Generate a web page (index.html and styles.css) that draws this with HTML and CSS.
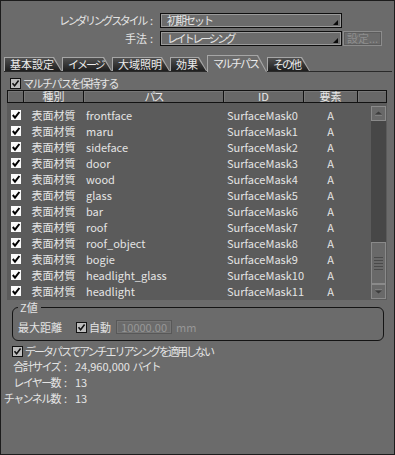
FILE: index.html
```html
<!DOCTYPE html>
<html lang="ja">
<head>
<meta charset="utf-8">
<link rel="stylesheet" href="styles.css">
</head>
<body>
<div class="win">
  <div class="top">
    <div class="frow">
      <span class="flabel"><span class="kana-l">レンダリングスタイル</span><span class="colon">:</span></span>
      <div class="select"><span class="sel-text kana">初期セット</span><i class="arrow"></i></div>
    </div>
    <div class="frow">
      <span class="flabel">手法<span class="colon c2">:</span></span>
      <div class="select"><span class="sel-text kana2">レイトレーシング</span><i class="arrow"></i></div>
      <div class="btn">設定...</div>
    </div>
  </div>

  <div class="tabs">
    <div class="tab w1"><div class="tab-in">基本設定</div></div>
    <div class="tab w2"><div class="tab-in kana">イメージ</div></div>
    <div class="tab w3"><div class="tab-in">大域照明</div></div>
    <div class="tab w4"><div class="tab-in">効果</div></div>
    <div class="tab w5 active"><div class="tab-in kana">マルチパス</div></div>
    <div class="tab w6"><div class="tab-in kana">その他</div></div>
  </div>

  <div class="chk-row keep">
    <span class="cb"><svg viewBox="0 0 9 9"><path d="M1.5 4.3 L3.6 6.8 L7.6 1.6"/></svg></span>
    <span class="chk-label kana1">マルチパスを保持する</span>
  </div>

  <div class="table">
    <div class="thead">
      <div class="th"></div>
      <div class="th">種別</div>
      <div class="th kana">パス</div>
      <div class="th">ID</div>
      <div class="th">要素</div>
      <div class="th"></div>
    </div>
    <div class="tbody">
      <div class="rows">
        <div class="tr"><span class="c-chk"><i class="wcb"><svg viewBox="0 0 10 10"><path d="M1.8 5 L4 7.6 L8.4 2"/></svg></i></span><span class="c-type">表面材質</span><span class="c-path">frontface</span><span class="c-id">SurfaceMask0</span><span class="c-el">A</span></div>
        <div class="tr"><span class="c-chk"><i class="wcb"><svg viewBox="0 0 10 10"><path d="M1.8 5 L4 7.6 L8.4 2"/></svg></i></span><span class="c-type">表面材質</span><span class="c-path">maru</span><span class="c-id">SurfaceMask1</span><span class="c-el">A</span></div>
        <div class="tr"><span class="c-chk"><i class="wcb"><svg viewBox="0 0 10 10"><path d="M1.8 5 L4 7.6 L8.4 2"/></svg></i></span><span class="c-type">表面材質</span><span class="c-path">sideface</span><span class="c-id">SurfaceMask2</span><span class="c-el">A</span></div>
        <div class="tr"><span class="c-chk"><i class="wcb"><svg viewBox="0 0 10 10"><path d="M1.8 5 L4 7.6 L8.4 2"/></svg></i></span><span class="c-type">表面材質</span><span class="c-path">door</span><span class="c-id">SurfaceMask3</span><span class="c-el">A</span></div>
        <div class="tr"><span class="c-chk"><i class="wcb"><svg viewBox="0 0 10 10"><path d="M1.8 5 L4 7.6 L8.4 2"/></svg></i></span><span class="c-type">表面材質</span><span class="c-path">wood</span><span class="c-id">SurfaceMask4</span><span class="c-el">A</span></div>
        <div class="tr"><span class="c-chk"><i class="wcb"><svg viewBox="0 0 10 10"><path d="M1.8 5 L4 7.6 L8.4 2"/></svg></i></span><span class="c-type">表面材質</span><span class="c-path">glass</span><span class="c-id">SurfaceMask5</span><span class="c-el">A</span></div>
        <div class="tr"><span class="c-chk"><i class="wcb"><svg viewBox="0 0 10 10"><path d="M1.8 5 L4 7.6 L8.4 2"/></svg></i></span><span class="c-type">表面材質</span><span class="c-path">bar</span><span class="c-id">SurfaceMask6</span><span class="c-el">A</span></div>
        <div class="tr"><span class="c-chk"><i class="wcb"><svg viewBox="0 0 10 10"><path d="M1.8 5 L4 7.6 L8.4 2"/></svg></i></span><span class="c-type">表面材質</span><span class="c-path">roof</span><span class="c-id">SurfaceMask7</span><span class="c-el">A</span></div>
        <div class="tr"><span class="c-chk"><i class="wcb"><svg viewBox="0 0 10 10"><path d="M1.8 5 L4 7.6 L8.4 2"/></svg></i></span><span class="c-type">表面材質</span><span class="c-path">roof_object</span><span class="c-id">SurfaceMask8</span><span class="c-el">A</span></div>
        <div class="tr"><span class="c-chk"><i class="wcb"><svg viewBox="0 0 10 10"><path d="M1.8 5 L4 7.6 L8.4 2"/></svg></i></span><span class="c-type">表面材質</span><span class="c-path">bogie</span><span class="c-id">SurfaceMask9</span><span class="c-el">A</span></div>
        <div class="tr"><span class="c-chk"><i class="wcb"><svg viewBox="0 0 10 10"><path d="M1.8 5 L4 7.6 L8.4 2"/></svg></i></span><span class="c-type">表面材質</span><span class="c-path">headlight_glass</span><span class="c-id">SurfaceMask10</span><span class="c-el">A</span></div>
        <div class="tr"><span class="c-chk"><i class="wcb"><svg viewBox="0 0 10 10"><path d="M1.8 5 L4 7.6 L8.4 2"/></svg></i></span><span class="c-type">表面材質</span><span class="c-path">headlight</span><span class="c-id">SurfaceMask11</span><span class="c-el">A</span></div>
      </div>
      <div class="sb">
        <div class="sb-btn"><svg viewBox="0 0 13 13"><path class="tri" d="M3 7.5 L6.5 4.5 L10 7.5 Z"/><path class="hl" d="M3 8.5 H10"/></svg></div>
        <div class="sb-track"></div>
        <div class="sb-thumb"><i></i><i></i><i></i><i></i><i></i></div>
        <div class="sb-btn"><svg viewBox="0 0 13 13"><path class="hl" d="M3 4.5 H10"/><path class="tri" d="M3 5.5 L6.5 8.5 L10 5.5 Z"/></svg></div>
      </div>
    </div>
  </div>

  <fieldset class="zgroup">
    <legend>Z値</legend>
    <div class="zrow">
      <span class="zlabel">最大距離</span>
      <span class="cb"><svg viewBox="0 0 9 9"><path d="M1.5 4.3 L3.6 6.8 L7.6 1.6"/></svg></span>
      <span class="auto">自動</span>
      <span class="num">10000.00</span>
      <span class="unit">mm</span>
    </div>
  </fieldset>

  <div class="chk-row aa">
    <span class="cb"><svg viewBox="0 0 9 9"><path d="M1.5 4.3 L3.6 6.8 L7.6 1.6"/></svg></span>
    <span class="chk-label kana">データパスでアンチエリアシングを適用しない</span>
  </div>

  <div class="info">
    <span class="ilabel"><span class="kana-i">合計サイズ</span><span class="colon">:</span></span><span class="ival">24,960,000 <span class="kana">バイト</span></span>
    <span class="ilabel"><span class="kana-i">レイヤー数</span><span class="colon">:</span></span><span class="ival">13</span>
    <span class="ilabel"><span class="kana-i">チャンネル数</span><span class="colon">:</span></span><span class="ival">13</span>
  </div>
</div>
</body>
</html>
```

FILE: styles.css
```css
* { box-sizing: border-box; }
body { margin: 0; }

.win {
  width: 395px;
  height: 455px;
  background: #6b6b6b;
  border: 1px solid #1c1c1c;
  font-family: "Noto Sans CJK JP", "Noto Sans", sans-serif;
  font-size: 11px;
  line-height: 13px;
  color: #e4e4e4;
  overflow: hidden;
}

/* narrow kana text, as in the reference's proportional UI font */
.kana { letter-spacing: -2px; }
.kana1 { letter-spacing: -1.5px; }
.kana2 { letter-spacing: -2.6px; }
.kana-l { letter-spacing: -2.3px; }
.kana-i { letter-spacing: -1.6px; }
.colon { margin-left: 4px; letter-spacing: 0; }
.colon.c2 { margin-left: 3px; }

/* top form */
.top {
  padding-top: 12px;
  display: flex;
  flex-direction: column;
  gap: 3px;
}
.frow {
  display: flex;
  align-items: center;
  height: 15px;
}
.flabel {
  width: 152px;
  text-align: right;
  white-space: nowrap;
  margin-right: 7px;
}
.select {
  width: 182px;
  height: 15px;
  border: 1px solid #0e0e0e;
  box-shadow: inset 0 0 0 1px #9a9a9a;
  display: flex;
  padding-left: 6px;
}
.sel-text {
  flex: 1;
  line-height: 13px;
  white-space: nowrap;
}
.arrow {
  align-self: flex-end;
  width: 0;
  height: 0;
  border-left: 5px solid transparent;
  border-bottom: 5px solid #0a0a0a;
  margin: 0 3px 2px 0;
}
.btn {
  width: 39px;
  height: 15px;
  margin-left: 1px;
  border: 1px solid #8c8c8c;
  box-shadow: inset 0 0 0 1px #5c5c5c;
  color: #8e8e8e;
  text-align: center;
  line-height: 13px;
}

/* tabs */
.tabs {
  display: flex;
  align-items: flex-end;
  margin: 9px 0 0 3px;
  width: 388px;
  height: 17px;
  border-bottom: 1px solid #2a2a2a;
}
.tab {
  height: 14px;
  background: #a6a6a6;
  clip-path: polygon(0 0, calc(100% - 8px) 0, 100% 100%, 0 100%);
  padding: 1px 0 0 1px;
}
.tab-in {
  height: 100%;
  background: linear-gradient(#505050, #1e1e1e);
  clip-path: polygon(0 0, calc(100% - 9px) 0, calc(100% - 1px) 100%, 0 100%);
  padding-left: 5px;
  line-height: 13px;
  color: #ececec;
  white-space: nowrap;
}
.tab.active {
  height: 17px;
  margin-bottom: -1px;
  clip-path: polygon(0 0, calc(100% - 9px) 0, 100% 100%, 0 100%);
}
.tab.active .tab-in {
  background: #6b6b6b;
  clip-path: polygon(0 0, calc(100% - 10px) 0, calc(100% - 1px) 100%, 0 100%);
  line-height: 14px;
}
.w1 { width: 58px; }
.w2 { width: 50px; }
.w3 { width: 58px; }
.w4 { width: 37px; }
.w5 { width: 60px; }
.w6 { width: 43px; }

/* checkboxes */
.chk-row {
  display: flex;
  align-items: center;
  height: 11px;
}
.keep { margin: 6px 0 0 9px; }
.aa { margin: 5px 0 0 11px; }
.chk-label { margin-left: 2px; line-height: 11px; white-space: nowrap; }
.cb {
  width: 11px;
  height: 11px;
  border: 1px solid #121212;
  background: #bdbdbd;
  display: flex;
  flex: none;
}
.cb svg { width: 9px; height: 9px; }
.cb path { fill: none; stroke: #111; stroke-width: 1.6; }

/* table */
.table { margin: 1px 0 0 6px; width: 380px; }
.thead {
  display: grid;
  grid-template-columns: 15px 59px 139px 79px 53px 28px;
  gap: 1px;
  padding: 1px;
  background: #121212;
  height: 13px;
}
.th {
  background: #686868;
  box-shadow: inset 1px 1px 0 #777;
  text-align: center;
  line-height: 11px;
  font-size: 11px;
  color: #e8e8e8;
}
.tbody {
  display: flex;
  height: 197px;
  background: #5b5b5b;
}
.rows { flex: 1; padding-top: 4px; }
.tr {
  display: grid;
  grid-template-columns: 15px 59px 139px 79px 53px;
  column-gap: 1px;
  padding-left: 1px;
  height: 16px;
  line-height: 16px;
  white-space: nowrap;
}
.c-chk { display: flex; align-items: center; justify-content: center; padding-left: 1px; }
.wcb {
  width: 10px;
  height: 10px;
  background: #fafafa;
  display: flex;
}
.wcb svg { width: 10px; height: 10px; }
.wcb path { fill: none; stroke: #000; stroke-width: 2; }
.c-type { text-align: center; }
.c-path { padding-left: 2px; }
.c-id { padding-left: 3px; }
.c-el { text-align: center; }

/* scrollbar */
.sb {
  width: 15px;
  margin: 3px 1px 1px 0;
  display: flex;
  flex-direction: column;
  background: #474747;
}
.sb-btn {
  height: 15px;
  background: #696969;
  border: 1px solid #8a8a8a;
  display: flex;
}
.sb-btn svg { width: 13px; height: 13px; }
.sb-btn .tri { fill: #3c3c3c; }
.sb-btn .hl { stroke: #7e7e7e; stroke-width: 1; fill: none; }
.sb-track { flex: 1; }
.sb-thumb {
  height: 42px;
  background: #696969;
  border: 1px solid #8a8a8a;
  display: flex;
  flex-direction: column;
  justify-content: center;
  gap: 2px;
  padding: 0 2px;
}
.sb-thumb i { display: block; height: 1px; background: #4a4a4a; }

/* Z group */
.zgroup {
  margin: 1px 0 0 11px;
  width: 372px;
  height: 40px;
  border: 1px solid #141414;
  border-radius: 6px;
  padding: 7px 0 0 5px;
}
.zgroup legend {
  padding: 0 3px 0 2px;
  line-height: 12px;
  color: #e4e4e4;
}
.zrow {
  display: flex;
  align-items: center;
  height: 14px;
}
.zlabel { width: 58px; line-height: 14px; }
.auto { margin-left: 2px; line-height: 14px; }
.num {
  margin-left: 5px;
  width: 56px;
  height: 14px;
  border: 1px solid #585858;
  box-shadow: inset 0 0 0 1px #767676;
  color: #979797;
  text-align: right;
  padding-right: 4px;
  line-height: 12px;
}
.unit { margin-left: 4px; color: #979797; line-height: 14px; }

/* info */
.info {
  margin-top: 1px;
  display: grid;
  grid-template-columns: 66px auto;
  column-gap: 8px;
  justify-content: start;
  line-height: 16px;
}
.ilabel { text-align: right; white-space: nowrap; }
.ival { white-space: nowrap; }
```
